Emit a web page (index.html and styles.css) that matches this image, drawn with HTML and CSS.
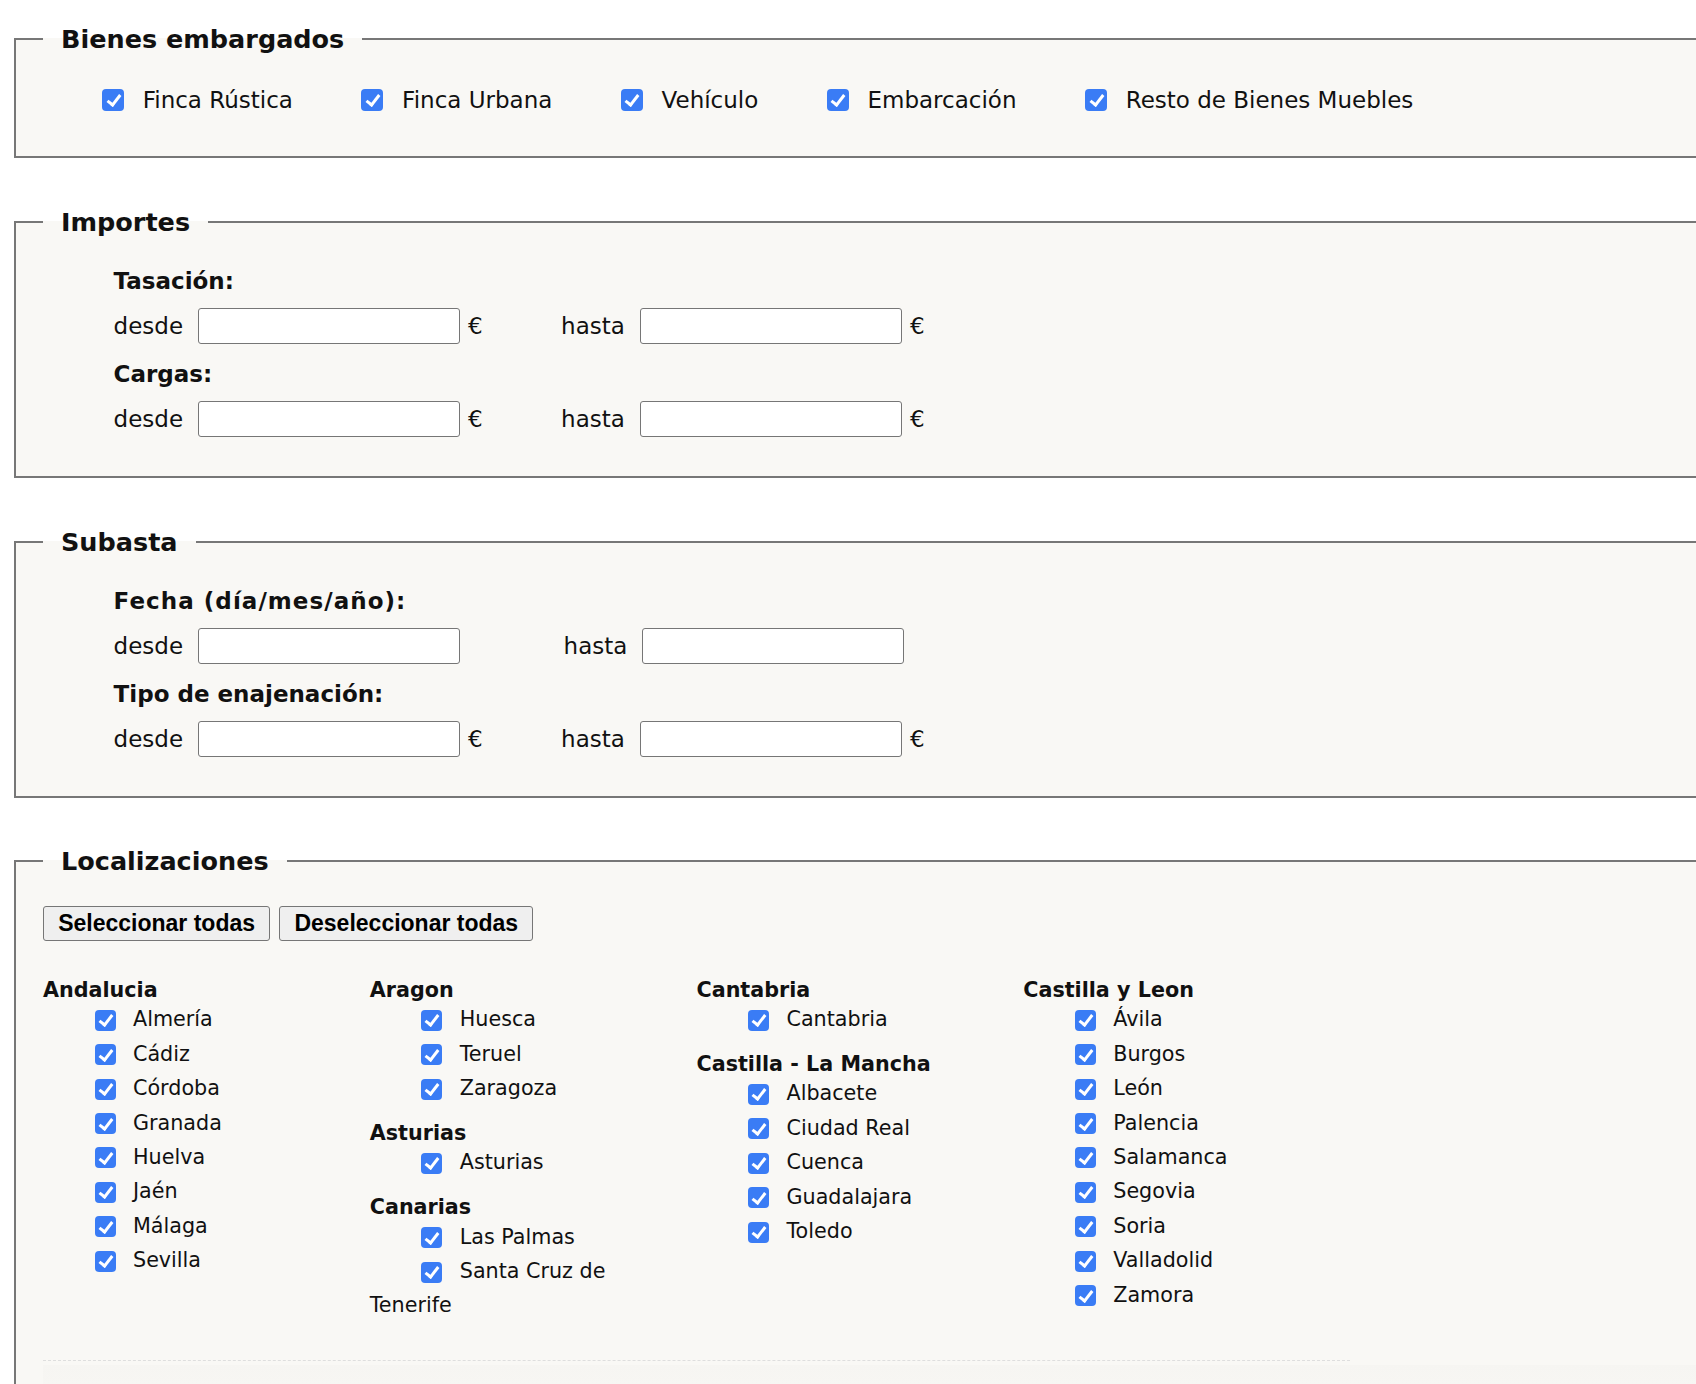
FILE: index.html
```html
<!DOCTYPE html>
<html lang="es">
<head>
<meta charset="utf-8">
<title>Búsqueda de subastas</title>
<link rel="stylesheet" href="styles.css">
</head>
<body>
<div class="page">
  <fieldset class="box">
    <legend>Bienes embargados</legend>
    <div class="fs-body fs-goods">
      <div class="cbrow">
        <label class="cbitem"><input class="cb" type="checkbox" checked>Finca Rústica</label>
        <label class="cbitem"><input class="cb" type="checkbox" checked>Finca Urbana</label>
        <label class="cbitem"><input class="cb" type="checkbox" checked>Vehículo</label>
        <label class="cbitem"><input class="cb" type="checkbox" checked>Embarcación</label>
        <label class="cbitem"><input class="cb" type="checkbox" checked>Resto de Bienes Muebles</label>
      </div>
    </div>
  </fieldset>

  <fieldset class="box">
    <legend>Importes</legend>
    <div class="fs-body fs-form">
      <div class="sublabel">Tasación:</div>
      <div class="range">
        <span>desde</span><input class="field" type="text"><span class="eur">€</span>
        <span class="to">hasta</span><input class="field" type="text"><span class="eur">€</span>
      </div>
      <div class="sublabel">Cargas:</div>
      <div class="range">
        <span>desde</span><input class="field" type="text"><span class="eur">€</span>
        <span class="to">hasta</span><input class="field" type="text"><span class="eur">€</span>
      </div>
    </div>
  </fieldset>

  <fieldset class="box">
    <legend>Subasta</legend>
    <div class="fs-body fs-form">
      <div class="sublabel wide">Fecha (día/mes/año):</div>
      <div class="range nocur">
        <span>desde</span><input class="field" type="text">
        <span class="to">hasta</span><input class="field" type="text">
      </div>
      <div class="sublabel">Tipo de enajenación:</div>
      <div class="range">
        <span>desde</span><input class="field" type="text"><span class="eur">€</span>
        <span class="to">hasta</span><input class="field" type="text"><span class="eur">€</span>
      </div>
    </div>
  </fieldset>

  <fieldset class="box">
    <legend>Localizaciones</legend>
    <div class="fs-body fs-loc">
      <div class="btns">
        <button type="button">Seleccionar todas</button>
        <button type="button">Deseleccionar todas</button>
      </div>
      <div class="cols">
        <div class="col">
          <div class="group">
            <div class="ghead">Andalucia</div>
            <div class="item"><input class="cb" type="checkbox" checked>Almería</div>
            <div class="item"><input class="cb" type="checkbox" checked>Cádiz</div>
            <div class="item"><input class="cb" type="checkbox" checked>Córdoba</div>
            <div class="item"><input class="cb" type="checkbox" checked>Granada</div>
            <div class="item"><input class="cb" type="checkbox" checked>Huelva</div>
            <div class="item"><input class="cb" type="checkbox" checked>Jaén</div>
            <div class="item"><input class="cb" type="checkbox" checked>Málaga</div>
            <div class="item"><input class="cb" type="checkbox" checked>Sevilla</div>
          </div>
        </div>
        <div class="col">
          <div class="group">
            <div class="ghead">Aragon</div>
            <div class="item"><input class="cb" type="checkbox" checked>Huesca</div>
            <div class="item"><input class="cb" type="checkbox" checked>Teruel</div>
            <div class="item"><input class="cb" type="checkbox" checked>Zaragoza</div>
          </div>
          <div class="group">
            <div class="ghead">Asturias</div>
            <div class="item"><input class="cb" type="checkbox" checked>Asturias</div>
          </div>
          <div class="group">
            <div class="ghead">Canarias</div>
            <div class="item"><input class="cb" type="checkbox" checked>Las Palmas</div>
            <div class="item"><input class="cb" type="checkbox" checked>Santa Cruz de Tenerife</div>
          </div>
        </div>
        <div class="col">
          <div class="group">
            <div class="ghead">Cantabria</div>
            <div class="item"><input class="cb" type="checkbox" checked>Cantabria</div>
          </div>
          <div class="group">
            <div class="ghead">Castilla - La Mancha</div>
            <div class="item"><input class="cb" type="checkbox" checked>Albacete</div>
            <div class="item"><input class="cb" type="checkbox" checked>Ciudad Real</div>
            <div class="item"><input class="cb" type="checkbox" checked>Cuenca</div>
            <div class="item"><input class="cb" type="checkbox" checked>Guadalajara</div>
            <div class="item"><input class="cb" type="checkbox" checked>Toledo</div>
          </div>
        </div>
        <div class="col">
          <div class="group">
            <div class="ghead">Castilla y Leon</div>
            <div class="item"><input class="cb" type="checkbox" checked>Ávila</div>
            <div class="item"><input class="cb" type="checkbox" checked>Burgos</div>
            <div class="item"><input class="cb" type="checkbox" checked>León</div>
            <div class="item"><input class="cb" type="checkbox" checked>Palencia</div>
            <div class="item"><input class="cb" type="checkbox" checked>Salamanca</div>
            <div class="item"><input class="cb" type="checkbox" checked>Segovia</div>
            <div class="item"><input class="cb" type="checkbox" checked>Soria</div>
            <div class="item"><input class="cb" type="checkbox" checked>Valladolid</div>
            <div class="item"><input class="cb" type="checkbox" checked>Zamora</div>
          </div>
        </div>
      </div>
      <div class="tail"></div>
    </div>
  </fieldset>
</div>
</body>
</html>
```

FILE: styles.css
```css
html, body {
  margin: 0;
  padding: 0;
  overflow: hidden;
  background: #ffffff;
}

body {
  font-family: "DejaVu Sans", Verdana, sans-serif;
  font-size: 23px;
  color: #111111;
}

.page {
  padding-top: 24px;
}

.box {
  box-sizing: border-box;
  width: 1760px;
  min-inline-size: 0;
  margin: 0 0 0 14px;
  padding: 0 27px;
  border: 2px solid #777777;
  background: #f9f8f5;
}

.box + .box {
  margin-top: 48.8px;
}

.box legend {
  font-weight: bold;
  font-size: 25.5px;
  line-height: 30px;
  padding: 0 18px;
  color: #111111;
}

/* Bienes embargados */
.fs-goods {
  padding: 25.5px 0 36.5px 59px;
}

.cbrow {
  display: flex;
  align-items: center;
  height: 40px;
}

.cbitem {
  display: flex;
  align-items: center;
  margin-right: 68.5px;
}

input.cb {
  appearance: none;
  -webkit-appearance: none;
  position: relative;
  flex: none;
  box-sizing: border-box;
  width: 22px;
  height: 22px;
  margin: 0 18.7px 0 0;
  border: none;
  border-radius: 4px;
  background: #3a7cf5;
}

input.cb::after {
  content: "";
  position: absolute;
  left: 7.5px;
  top: 3px;
  width: 5px;
  height: 11px;
  border: solid #ffffff;
  border-width: 0 3px 3px 0;
  transform: rotate(38deg);
}

/* Importes / Subasta */
.fs-form {
  padding: 29px 0 38.5px 70.6px;
}

.sublabel {
  font-weight: bold;
  line-height: 30px;
}

.sublabel.wide {
  letter-spacing: 1.05px;
}

.range {
  display: flex;
  align-items: center;
  height: 36px;
  margin-top: 12.5px;
}

.range + .sublabel {
  margin-top: 14.5px;
}

.field {
  box-sizing: border-box;
  width: 262px;
  height: 36px;
  margin: 0 0 0 15px;
  padding: 0 6px;
  border: 1px solid #767676;
  border-radius: 3px;
  background: #ffffff;
  font: inherit;
}

.eur {
  margin-left: 8px;
}

.to {
  margin-left: 78.4px;
}

.nocur .to {
  margin-left: 103.5px;
}

/* Localizaciones */
.fs-loc {
  padding-top: 30px;
}

.btns {
  display: flex;
  gap: 9px;
}

.btns button {
  box-sizing: border-box;
  height: 34.3px;
  padding: 0 14.2px;
  border: 1px solid #767676;
  border-radius: 3px;
  background: #efefef;
  color: #000000;
  font-family: "Liberation Sans", Arial, sans-serif;
  font-weight: bold;
  font-size: 23px;
  line-height: 1;
}

.cols {
  display: grid;
  grid-template-columns: repeat(4, 326.75px);
  width: 1307px;
  margin-top: 36.3px;
  padding-bottom: 23px;
  border-bottom: 1px dashed #dedede;
  font-size: 20.7px;
}

.col {
  padding-right: 12px;
}

.group {
  margin-bottom: 14.6px;
}

.ghead {
  font-weight: bold;
  line-height: 26.2px;
}

.item {
  text-indent: 51.5px;
  line-height: 33.5px;
  margin-bottom: 0.94px;
}

.item input.cb {
  width: 21px;
  height: 21px;
  margin: 0 17.5px 0 0;
  vertical-align: middle;
  text-indent: 0;
}

.item input.cb::after {
  left: 7px;
  top: 2.5px;
}

.tail {
  height: 140px;
  background: linear-gradient(#f6f5f2, #f9f8f5 60px);
  margin-top: 4px;
}
```
